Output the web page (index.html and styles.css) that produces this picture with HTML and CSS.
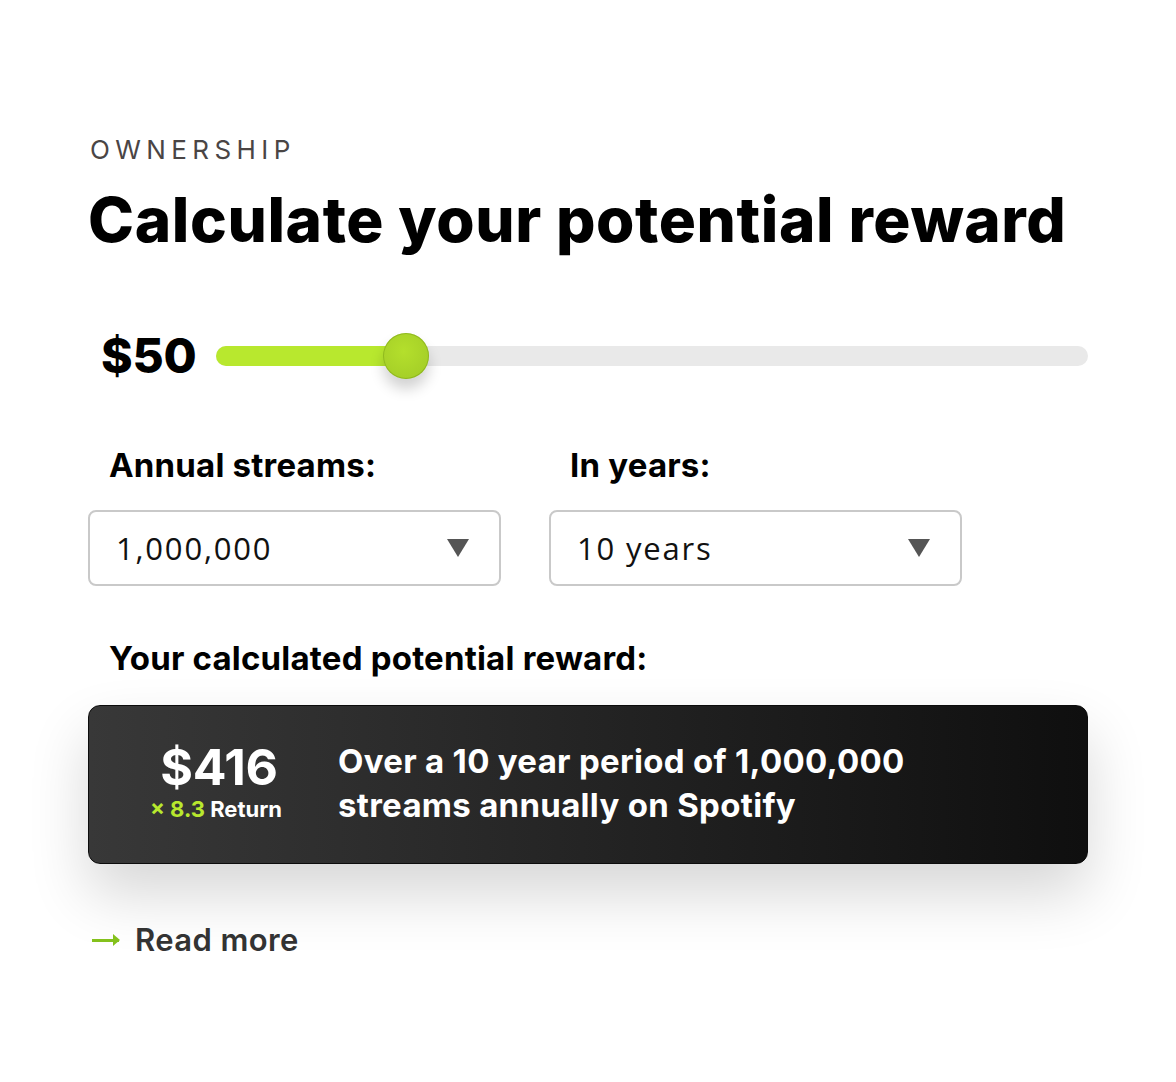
FILE: index.html
```html
<!DOCTYPE html>
<html lang="en">
<head>
<meta charset="utf-8">
<title>Calculate your potential reward</title>
<link rel="stylesheet" href="styles.css">
</head>
<body>
<main class="calc">
  <div class="eyebrow">OWNERSHIP</div>
  <h1 class="title">Calculate your potential reward</h1>

  <div class="amount-row">
    <div class="amount">$50</div>
    <div class="slider">
      <div class="slider-fill" style="width: 21.8%"></div>
      <div class="slider-thumb" style="left: 21.8%"></div>
    </div>
  </div>

  <div class="fields">
    <div class="field">
      <div class="label">Annual streams:</div>
      <div class="select"><span>1,000,000</span><span class="caret"></span></div>
    </div>
    <div class="field">
      <div class="label">In years:</div>
      <div class="select"><span>10 years</span><span class="caret"></span></div>
    </div>
  </div>

  <div class="label result-label">Your calculated potential reward:</div>

  <div class="card">
    <div class="card-value">
      <div class="big">$416</div>
      <div class="ret"><span class="accent">× 8.3</span> Return</div>
    </div>
    <div class="card-text">Over a 10 year period of 1,000,000<br>streams annually on Spotify</div>
  </div>

  <a class="more" href="#"><span class="arrow"></span>Read more</a>
</main>
</body>
</html>
```
FILE: styles.css
```css
* { box-sizing: border-box; }
html, body { margin: 0; padding: 0; background: #fff; }
body { font-family: Inter, "Open Sans", sans-serif; color: #000; }

.calc {
  width: 1176px;
  padding: 134px 88px 0 88px;
  display: flex;
  flex-direction: column;
}

.eyebrow {
  font-family: Inter, sans-serif;
  font-size: 26px;
  line-height: 32px;
  letter-spacing: 5.4px;
  color: #4a4545;
  font-weight: 400;
  padding-left: 2px;
}

.title {
  margin: 18px 0 0 0;
  font-family: Inter, sans-serif;
  font-weight: 800;
  font-size: 62px;
  line-height: 72px;
  letter-spacing: 0.6px;
  white-space: nowrap;
}

.amount-row {
  margin-top: 72px;
  display: flex;
  align-items: center;
  gap: 20px;
  padding-left: 13px;
}
.amount {
  font-weight: 800;
  font-size: 48px;
  line-height: 56px;
  letter-spacing: -0.3px;
}
.slider {
  position: relative;
  flex: 1;
  height: 20px;
  border-radius: 10px;
  background: #e9e9e9;
}
.slider-fill {
  position: absolute;
  left: 0; top: 0; bottom: 0;
  border-radius: 10px;
  background: #b8e82e;
}
.slider-thumb {
  position: absolute;
  top: 50%;
  width: 46px;
  height: 46px;
  margin: -23px 0 0 -23px;
  border-radius: 50%;
  background: radial-gradient(circle at 45% 40%, #b4df2c 0%, #a6d028 70%, #97c022 100%);
  box-shadow: 0 10px 14px rgba(0,0,0,0.18), inset 0 0 0 1px rgba(120,160,20,0.5);
}

.fields {
  margin-top: 62px;
  display: flex;
  gap: 48px;
}
.field { display: flex; flex-direction: column; width: 413px; }
.label {
  font-weight: 700;
  font-size: 33px;
  line-height: 38px;
  padding-left: 21px;
  letter-spacing: 0.2px;
}
.select {
  margin-top: 26px;
  height: 76px;
  border: 2px solid #c9c9c9;
  border-radius: 8px;
  display: flex;
  align-items: center;
  justify-content: space-between;
  padding: 0 30px 0 26px;
  font-family: "Open Sans", sans-serif;
  font-size: 31px;
  color: #111;
  letter-spacing: 1.8px;
}
.caret {
  width: 0; height: 0;
  border-left: 11px solid transparent;
  border-right: 11px solid transparent;
  border-top: 18px solid #555;
}

.result-label { margin-top: 53px; }

.card {
  margin-top: 28px;
  height: 159px;
  border-radius: 12px;
  border: 1px solid #0c0c0c;
  background: linear-gradient(90deg, #383838 0%, #2a2a2a 35%, #0f0f0f 100%);
  box-shadow: 0 30px 60px rgba(0,0,0,0.16);
  display: flex;
  align-items: center;
  color: #fff;
}
.card-value {
  width: 260px;
  display: flex;
  flex-direction: column;
  align-items: center;
  padding-bottom: 10px;
}
.big {
  font-weight: 700;
  font-size: 50px;
  line-height: 58px;
  letter-spacing: -0.3px;
}
.ret {
  font-weight: 700;
  font-size: 22px;
  line-height: 26px;
  margin-left: -6px;
}
.accent { color: #b8e82e; }
.card-text {
  font-weight: 700;
  font-size: 33px;
  line-height: 44px;
  letter-spacing: 0.3px;
  padding-bottom: 4px;
  margin-left: -11px;
}

.more {
  margin-top: 58px;
  display: flex;
  align-items: center;
  gap: 16px;
  text-decoration: none;
  color: #333;
  font-size: 31px;
  font-weight: 600;
  line-height: 36px;
  letter-spacing: 0.4px;
  padding-left: 4px;
}
.arrow {
  position: relative;
  width: 27px;
  height: 3px;
  background: #84c11c;
}
.arrow::after {
  content: "";
  position: absolute;
  right: -1px; top: -5px;
  border-left: 7px solid #84c11c;
  border-top: 6.5px solid transparent;
  border-bottom: 6.5px solid transparent;
}
```
